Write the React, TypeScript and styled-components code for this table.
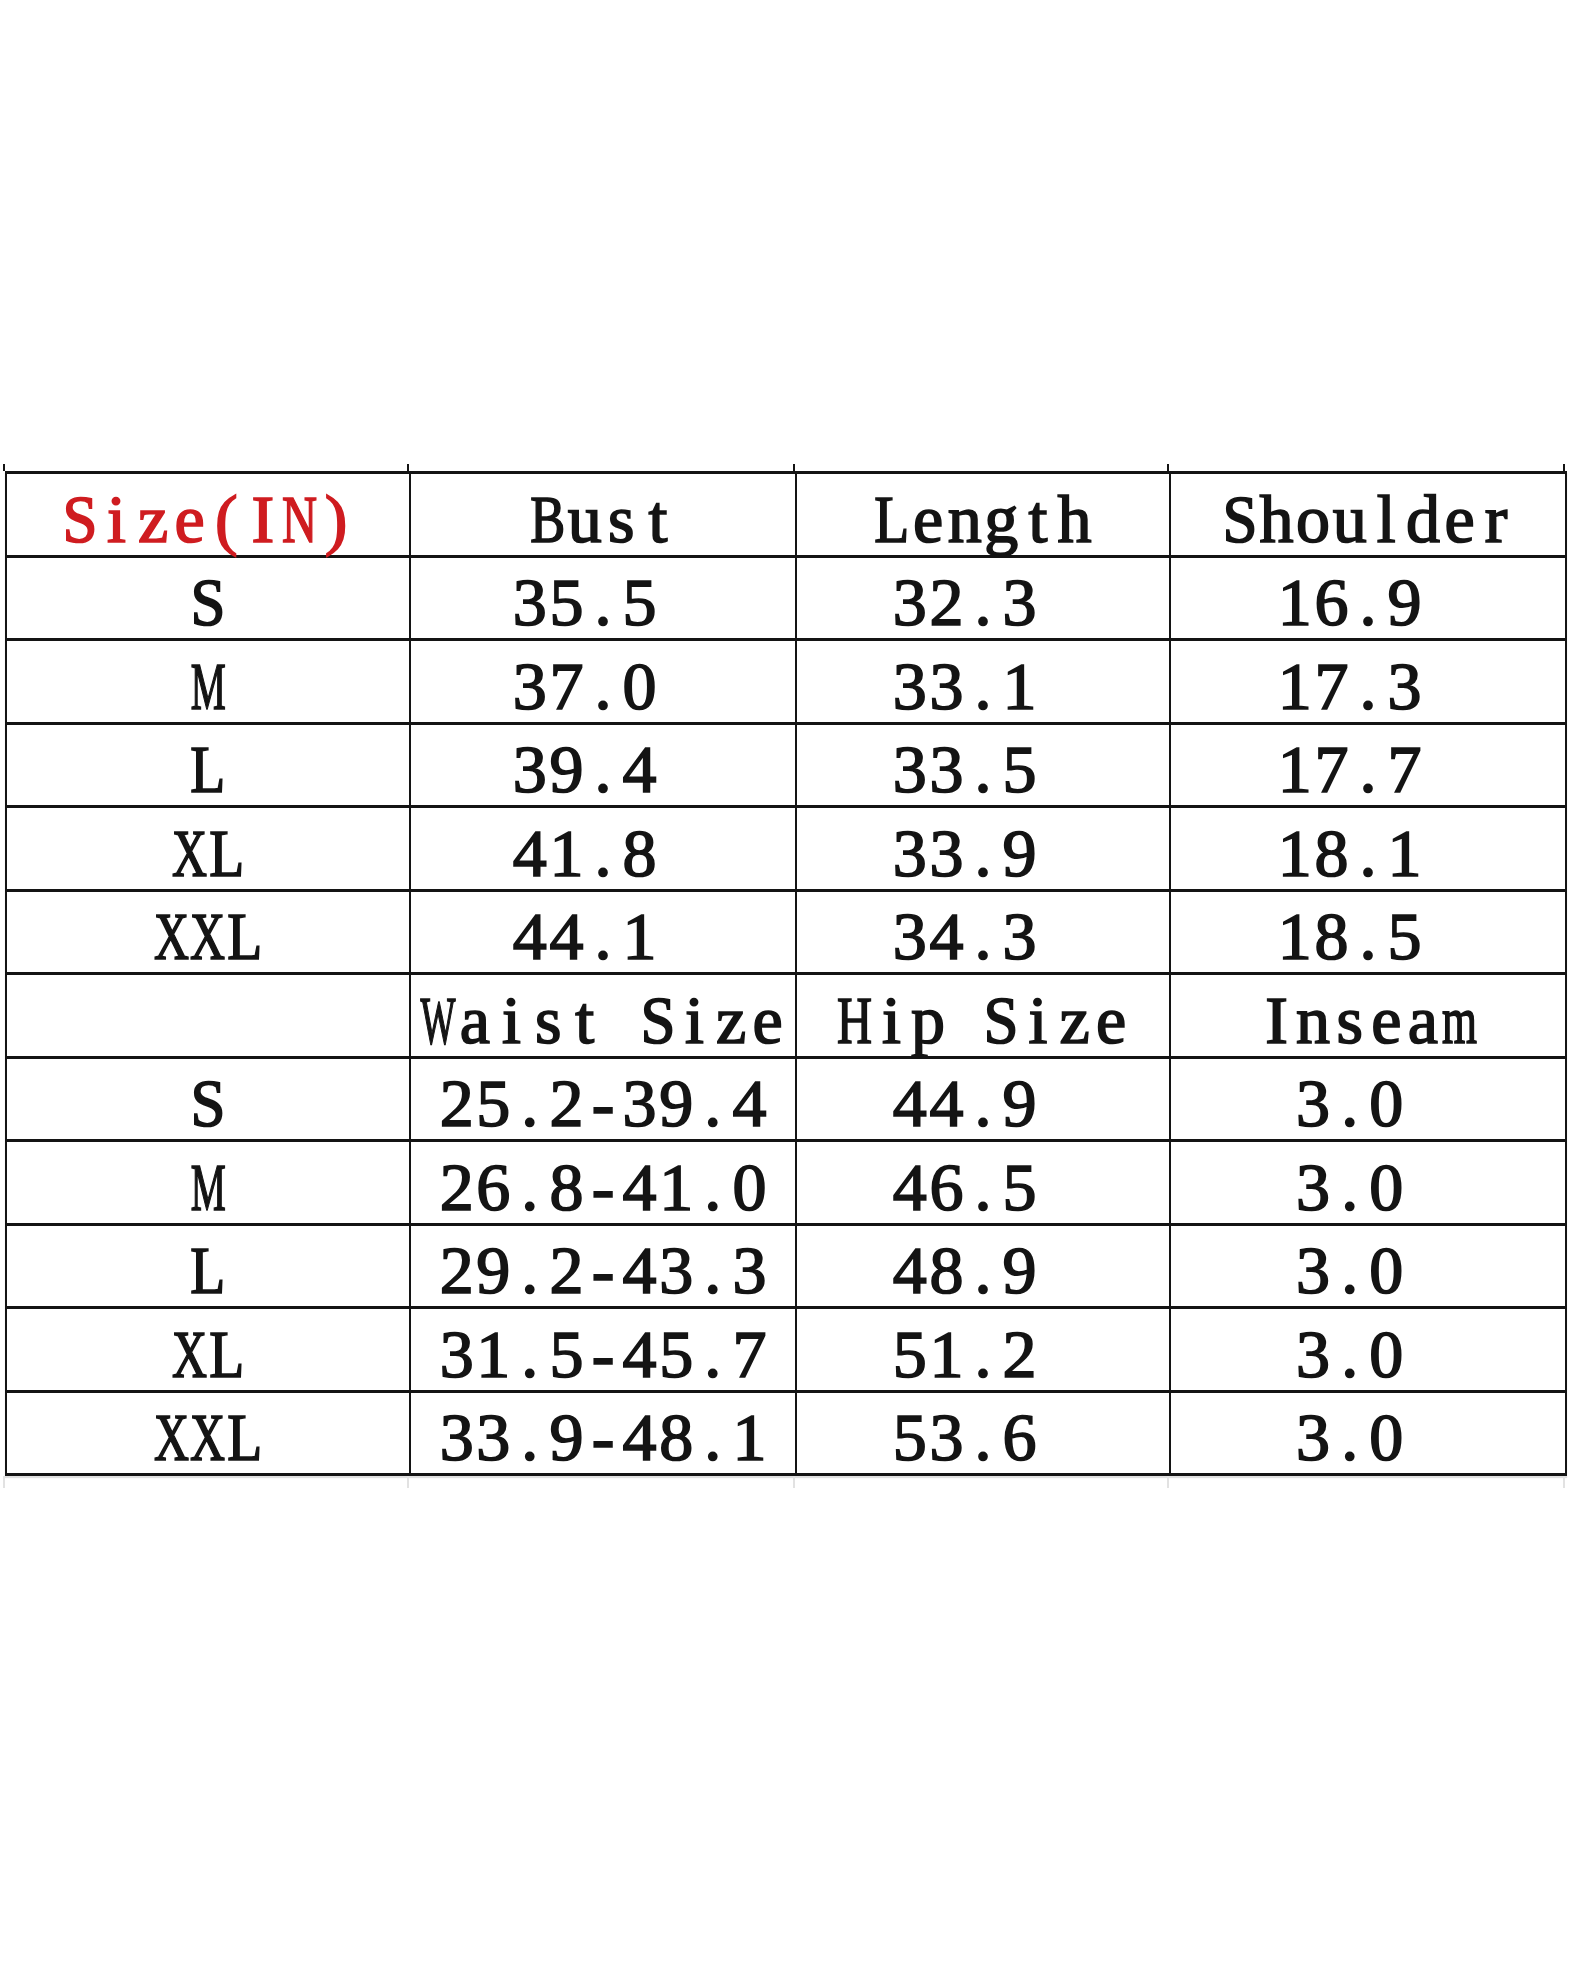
import React from "react";
import styled, { createGlobalStyle } from "styled-components";

const Global = createGlobalStyle`
  html, body { margin: 0; padding: 0; background: #ffffff; }
  body { font-family: "Liberation Serif", "DejaVu Serif", serif; }
`;

const COLS = "402px 384px 372px 394px";
const FONT_PX = 68;
const CELL_W = 36.6;

// Times-like advance widths (em) for the wide glyphs, used to squeeze them
// into a fixed half-em cell the way the reference's CJK font draws Latin text.
const WIDE: Record<string, number> = {
  B: 0.667,
  L: 0.611,
  X: 0.722,
  N: 0.722,
  H: 0.722,
  M: 0.889,
  W: 0.944,
  m: 0.778,
  S: 0.556,
};

const squeeze = (ch: string) => {
  const w = WIDE[ch];
  if (!w) return 1;
  const px = w * FONT_PX;
  const max = 35;
  return px > max ? max / px : 1;
};

const Page = styled.div`
  width: 1572px;
  min-height: 1966px;
  background: #fff;
  padding-top: 464px;
  box-sizing: border-box;
`;

const Frame = styled.div`
  margin-left: 5px;
  width: 1562px;
  display: flex;
  flex-direction: column;
`;

const Ticks = styled.div<{ $h: number; $color: string }>`
  display: grid;
  grid-template-columns: ${COLS} 0px;
  column-gap: 2px;
  height: ${(p) => p.$h}px;
  & > span {
    border-left: 2px solid ${(p) => p.$color};
    margin-left: -2px;
  }
`;

const Table = styled.div`
  display: grid;
  grid-template-columns: ${COLS};
  grid-auto-rows: 80.5px;
  column-gap: 2px;
  row-gap: 3px;
  padding: 3px 2px;
  background: #141414;
  box-shadow: 0 2px 1px rgba(0, 0, 0, 0.12);
`;

const Cell = styled.div<{ $red?: boolean }>`
  background: #fff;
  display: flex;
  align-items: center;
  justify-content: center;
  padding-top: 9px;
  box-sizing: border-box;
  font-family: "Liberation Serif", "DejaVu Serif", serif;
  font-weight: 400;
  font-size: ${FONT_PX}px;
  line-height: 1;
  white-space: nowrap;
  color: ${(p) => (p.$red ? "#cf1c20" : "#141414")};
  -webkit-text-stroke: 1.7px currentColor;
`;

const Glyph = styled.span`
  display: inline-flex;
  justify-content: center;
  width: ${CELL_W}px;
`;

const Ink = styled.span<{ $sx: number }>`
  display: inline-block;
  transform: scaleX(${(p) => p.$sx});
  transform-origin: center;
`;

const Mono = ({ text }: { text: string }) => (
  <>
    {Array.from(text).map((ch, k) => (
      <Glyph key={k}>
        <Ink $sx={squeeze(ch)}>{ch === " " ? "\u00a0" : ch}</Ink>
      </Glyph>
    ))}
  </>
);

// Single values carry a trailing space in the source sheet, which shifts
// them half a character to the left of the column centre.
const rows: string[][] = [
  ["Size(IN)", "Bust", "Length", "Shoulder"],
  ["S", "35.5 ", "32.3 ", "16.9 "],
  ["M", "37.0 ", "33.1 ", "17.3 "],
  ["L", "39.4 ", "33.5 ", "17.7 "],
  ["XL", "41.8 ", "33.9 ", "18.1 "],
  ["XXL", "44.1 ", "34.3 ", "18.5 "],
  ["", "Waist Size", "Hip Size", "Inseam"],
  ["S", "25.2-39.4", "44.9 ", "3.0 "],
  ["M", "26.8-41.0", "46.5 ", "3.0 "],
  ["L", "29.2-43.3", "48.9 ", "3.0 "],
  ["XL", "31.5-45.7", "51.2 ", "3.0 "],
  ["XXL", "33.9-48.1", "53.6 ", "3.0 "],
];

export default function App() {
  return (
    <>
      <Global />
      <Page>
        <Frame>
          <Ticks $h={7} $color="#141414">
            <span />
            <span />
            <span />
            <span />
            <span />
          </Ticks>
          <Table>
            {rows.map((r, i) =>
              r.map((t, j) => (
                <Cell key={`${i}-${j}`} $red={i === 0 && j === 0}>
                  <Mono text={t} />
                </Cell>
              ))
            )}
          </Table>
          <Ticks $h={12} $color="#e2e2e2">
            <span />
            <span />
            <span />
            <span />
            <span />
          </Ticks>
        </Frame>
      </Page>
    </>
  );
}
